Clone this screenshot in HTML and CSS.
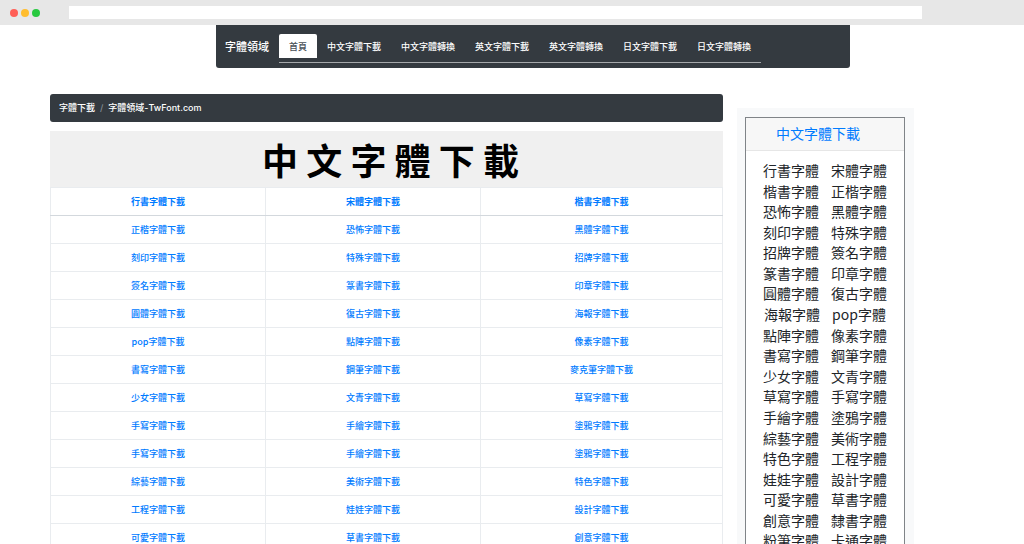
FILE: index.html
```html
<!DOCTYPE html>
<html lang="zh-Hant">
<head>
<meta charset="utf-8">
<meta name="viewport" content="width=device-width, initial-scale=1">
<title>字體領域</title>
<link rel="stylesheet" href="styles.css">
</head>
<body>
<div class="window">
  <div class="chrome">
    <div class="dots"><span class="dot red"></span><span class="dot amber"></span><span class="dot green"></span></div>
    <input class="address" type="text" aria-label="網址">
  </div>

  <div class="page">
    <header class="navbar">
      <a class="brand" href="#">字體領域</a>
      <nav class="tabs">
        <a class="tab active" href="#">首頁</a>
        <a class="tab" href="#">中文字體下載</a>
        <a class="tab" href="#">中文字體轉換</a>
        <a class="tab" href="#">英文字體下載</a>
        <a class="tab" href="#">英文字體轉換</a>
        <a class="tab" href="#">日文字體下載</a>
        <a class="tab" href="#">日文字體轉換</a>
      </nav>
    </header>

    <div class="columns">
      <main class="main">
        <nav class="breadcrumb" aria-label="breadcrumb">
          <a href="#">字體下載</a><span class="slash">/</span><span>字體領域-TwFont.com</span>
        </nav>
        <h1 class="banner">中 文 字 體 下 載</h1>
        <table class="fonts">
          <thead>
            <tr><th><a href="#">行書字體下載</a></th><th><a href="#">宋體字體下載</a></th><th><a href="#">楷書字體下載</a></th></tr>
          </thead>
          <tbody>
            <tr><td><a href="#">正楷字體下載</a></td><td><a href="#">恐怖字體下載</a></td><td><a href="#">黑體字體下載</a></td></tr>
            <tr><td><a href="#">刻印字體下載</a></td><td><a href="#">特殊字體下載</a></td><td><a href="#">招牌字體下載</a></td></tr>
            <tr><td><a href="#">簽名字體下載</a></td><td><a href="#">篆書字體下載</a></td><td><a href="#">印章字體下載</a></td></tr>
            <tr><td><a href="#">圓體字體下載</a></td><td><a href="#">復古字體下載</a></td><td><a href="#">海報字體下載</a></td></tr>
            <tr><td><a href="#">pop字體下載</a></td><td><a href="#">點陣字體下載</a></td><td><a href="#">像素字體下載</a></td></tr>
            <tr><td><a href="#">書寫字體下載</a></td><td><a href="#">鋼筆字體下載</a></td><td><a href="#">麥克筆字體下載</a></td></tr>
            <tr><td><a href="#">少女字體下載</a></td><td><a href="#">文青字體下載</a></td><td><a href="#">草寫字體下載</a></td></tr>
            <tr><td><a href="#">手寫字體下載</a></td><td><a href="#">手繪字體下載</a></td><td><a href="#">塗鴉字體下載</a></td></tr>
            <tr><td><a href="#">手寫字體下載</a></td><td><a href="#">手繪字體下載</a></td><td><a href="#">塗鴉字體下載</a></td></tr>
            <tr><td><a href="#">綜藝字體下載</a></td><td><a href="#">美術字體下載</a></td><td><a href="#">特色字體下載</a></td></tr>
            <tr><td><a href="#">工程字體下載</a></td><td><a href="#">娃娃字體下載</a></td><td><a href="#">設計字體下載</a></td></tr>
            <tr><td><a href="#">可愛字體下載</a></td><td><a href="#">草書字體下載</a></td><td><a href="#">創意字體下載</a></td></tr>
          </tbody>
        </table>
      </main>

      <aside class="sidebar">
        <section class="card">
          <h2 class="card-title"><a href="#">中文字體下載</a></h2>
          <ul class="pairs">
            <li><span>行書字體</span><span>宋體字體</span></li>
            <li><span>楷書字體</span><span>正楷字體</span></li>
            <li><span>恐怖字體</span><span>黑體字體</span></li>
            <li><span>刻印字體</span><span>特殊字體</span></li>
            <li><span>招牌字體</span><span>簽名字體</span></li>
            <li><span>篆書字體</span><span>印章字體</span></li>
            <li><span>圓體字體</span><span>復古字體</span></li>
            <li><span>海報字體</span><span>pop字體</span></li>
            <li><span>點陣字體</span><span>像素字體</span></li>
            <li><span>書寫字體</span><span>鋼筆字體</span></li>
            <li><span>少女字體</span><span>文青字體</span></li>
            <li><span>草寫字體</span><span>手寫字體</span></li>
            <li><span>手繪字體</span><span>塗鴉字體</span></li>
            <li><span>綜藝字體</span><span>美術字體</span></li>
            <li><span>特色字體</span><span>工程字體</span></li>
            <li><span>娃娃字體</span><span>設計字體</span></li>
            <li><span>可愛字體</span><span>草書字體</span></li>
            <li><span>創意字體</span><span>隸書字體</span></li>
            <li><span>粉筆字體</span><span>卡通字體</span></li>
          </ul>
        </section>
      </aside>
    </div>
  </div>
</div>
</body>
</html>
```

FILE: styles.css
```css
* { box-sizing: border-box; }

body {
  margin: 0;
  background: #fff;
  color: #212529;
  font: 500 9px/18px "Noto Sans CJK TC", "Liberation Sans", sans-serif;
}

a { color: #007bff; text-decoration: none; }

.window { height: 100vh; overflow: hidden; }

/* Browser frame */
.chrome {
  display: flex;
  align-items: center;
  height: 25px;
  padding: 0 102px 0 10px;
  background: #e7e7e7;
}
.dots { display: flex; gap: 3px; width: 59px; }
.dot { width: 8px; height: 8px; border-radius: 50%; }
.red { background: #ff5f57; }
.amber { background: #ffbd2e; }
.green { background: #28c940; }
.address {
  flex: 1;
  min-width: 0;
  height: 13px;
  padding: 0 6px;
  border: 0;
  background: #fff;
  font: inherit;
}

/* Top navigation */
.page { padding: 0 110px 0 50px; }
.navbar {
  display: flex;
  gap: 10px;
  margin: 0 64px 26px 166px;
  padding: 9px 9px 5px;
  background: #343a40;
  border-radius: 0 0 3px 3px;
  white-space: nowrap;
}
.brand { color: #fff; font-size: 11px; line-height: 24px; }
.tabs { display: flex; padding-bottom: 4px; border-bottom: 1px solid #a5a8ab; }
.tab { padding: 2px 10px 0; color: #fff; line-height: 22px; border-radius: 2px 2px 0 0; }
.tab.active { background: #fff; color: #495057; }

/* Content */
.columns {
  display: grid;
  grid-template-columns: minmax(0, 1fr) 177px;
  gap: 14px;
}
.breadcrumb {
  display: flex;
  gap: 5px;
  margin-bottom: 9px;
  padding: 5px 9px;
  background: #343a40;
  border-radius: 3px;
  color: #fff;
  font-family: Inter, "Noto Sans CJK TC", sans-serif;
}
.breadcrumb a { color: #fff; }
.slash { color: #868e96; }

.banner {
  margin: 0;
  padding: 4px 0 4px 8px;
  background: #f0f0f0;
  color: #000;
  font-size: 36px;
  font-weight: 700;
  line-height: 48px;
  text-align: center;
}
.fonts { width: 100%; table-layout: fixed; border-collapse: collapse; }
.fonts th, .fonts td {
  width: 32%;
  height: 28px;
  padding: 0;
  border: 1px solid #e9ecef;
  text-align: center;
}
.fonts th { border-bottom-color: #d3d8dd; font-weight: 700; }
.fonts th:last-child { width: 36%; }

/* Side card */
.sidebar {
  display: flex;
  margin-top: 14px;
  padding: 9px 9px 0 8px;
  background: #f8f9fa;
}
.card {
  display: flex;
  flex: 1;
  flex-direction: column;
  border: 1px solid #808488;
  border-bottom: 0;
  background: #fff;
  font-size: 14px;
  font-weight: 400;
}
.card-title {
  margin: 0;
  padding: 5px 14px 7px 0;
  border-bottom: 1px solid #e6e6e6;
  background: #f7f7f7;
  font-size: 14px;
  font-weight: 400;
  line-height: 20px;
  text-align: center;
}
.pairs {
  display: grid;
  flex: 1;
  grid-auto-rows: 1fr;
  margin: 0;
  padding: 9px 0 1px;
  list-style: none;
}
.pairs li { display: flex; justify-content: center; gap: 12px; line-height: 20px; }
```
